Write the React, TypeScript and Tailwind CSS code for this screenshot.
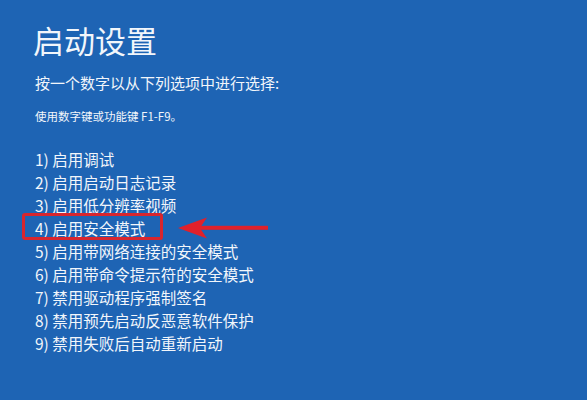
import React from "react";

const items = [
  "1) 启用调试",
  "2) 启用启动日志记录",
  "3) 启用低分辨率视频",
  "4) 启用安全模式",
  "5) 启用带网络连接的安全模式",
  "6) 启用带命令提示符的安全模式",
  "7) 禁用驱动程序强制签名",
  "8) 禁用预先启动反恶意软件保护",
  "9) 禁用失败后自动重新启动",
];

export default function App() {
  return (
    <div
      className="w-[587px] h-[400px] overflow-hidden bg-[#1e64b4] text-[#f2f6fb] pl-[35px] pt-[20px]"
      style={{ fontFamily: '"Noto Sans CJK SC", "Noto Sans", sans-serif' }}
    >
      <h1 className="-ml-[2px] text-[31px] leading-[40px] font-normal">启动设置</h1>
      <p className="mt-[13px] text-[15px] leading-[20px]">按一个数字以从下列选项中进行选择:</p>
      <p className="mt-[15px] text-[11.5px] leading-[16px]">使用数字键或功能键 F1-F9。</p>
      <ul className="mt-[24px] flex flex-col">
        {items.map((t, i) => (
          <li key={i} className="relative text-[15.5px] leading-[23px] whitespace-nowrap">
            {t}
            {i === 3 && (
              <>
                <div className="absolute left-[-13px] top-[-4px] w-[141px] h-[27px] border-[3px] border-[#d8262e] rounded-[3px]" />
                <svg
                  className="absolute left-[141px] top-[-2px]"
                  width="94"
                  height="26"
                  viewBox="0 0 94 26"
                >
                  <rect x="22" y="10.8" width="70" height="4" fill="#e0212b" />
                  <polygon points="2,13 31,2.5 24,13 31,23.5" fill="#e0212b" />
                </svg>
              </>
            )}
          </li>
        ))}
      </ul>
    </div>
  );
}
